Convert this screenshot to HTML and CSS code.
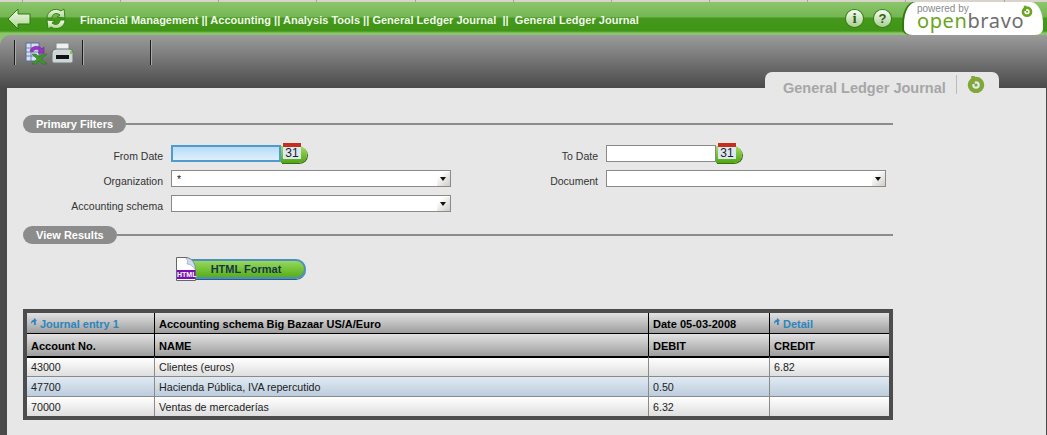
FILE: index.html
```html
<!DOCTYPE html>
<html lang="en">
<head>
<meta charset="UTF-8">
<meta name="viewport" content="width=device-width, initial-scale=1.0">
<title>General Ledger Journal</title>
<link rel="stylesheet" href="styles.css">
</head>
<body>
<div class="tabstrip"></div>
<div class="topbar">
    <svg class="nav-back" width="24" height="24" viewBox="0 0 24 24">
        <defs>
            <linearGradient id="navfill" x1="0" y1="0" x2="0" y2="1">
                <stop offset="0" stop-color="#f4faee"/>
                <stop offset="1" stop-color="#a9d48a"/>
            </linearGradient>
        </defs>
        <path d="M1 12 L11 2 V7 H23 V17 H11 V22 Z" fill="url(#navfill)" stroke="#2f7a10" stroke-width="1"/>
    </svg>
    <svg class="nav-refresh" width="22" height="24" viewBox="0 0 22 24">
        <path d="M2 11 C2 4 10 0 16 4 L19 2 L20 11 L12 10 L15 8 C11 5 7 7 7 11 Z" fill="url(#navfill)" stroke="#2f7a10" stroke-width="0.9"/>
        <path d="M20 13 C20 20 12 24 6 20 L3 22 L2 13 L10 14 L7 16 C11 19 15 17 15 13 Z" fill="url(#navfill)" stroke="#2f7a10" stroke-width="0.9"/>
    </svg>
    <div class="breadcrumb">Financial Management || Accounting || Analysis Tools || General Ledger Journal &nbsp;||&nbsp; General Ledger Journal</div>
    <div class="round-btn round-first info-btn">i</div>
    <div class="round-btn">?</div>
    <div class="logo">
        <div class="logo-powered">powered by</div>
        <div class="logo-name"><span class="logo-open">open</span><span class="logo-bravo">bravo</span></div>
        <svg class="logo-mark" width="12" height="12" viewBox="0 0 18 18">
            <circle cx="9" cy="10" r="6" fill="none" stroke="#6aa51f" stroke-width="4"/>
            <path d="M6 1 V9" stroke="#6aa51f" stroke-width="3.5"/>
            <circle cx="9" cy="10" r="1.5" fill="#6aa51f"/>
        </svg>
    </div>
</div>
<div class="toolbar-wrap">
    <div class="toolbar">
        <div class="tools">
            <span class="tool-sep"></span>
            <svg class="tool-icon" width="23" height="23" viewBox="0 0 23 23">
                <rect x="1" y="1" width="13" height="18" fill="#d5e0f2" stroke="#5a6c9a"/>
                <path d="M1 6 H14 M1 10 H14 M1 14 H14 M6 1 V19" stroke="#5a6c9a" stroke-width="0.8"/>
                <path d="M5 9 C7 3 14 3 17 7 L19 5 V11 H13 L15 9 C12 7 9 7 8 10 Z" fill="#9a34c6" stroke="#6b1e92" stroke-width="0.5"/>
                <path d="M7 12 H11 L14 15 L18 12 H22 L16 17 L22 22 H18 L14 19 L11 22 H7 L12 17 Z" fill="#3f9a2c" stroke="#246b18" stroke-width="0.5"/>
            </svg>
            <svg class="tool-icon" width="23" height="23" viewBox="0 0 23 23">
                <rect x="5" y="1" width="13" height="8" rx="1" fill="#eef0f0" stroke="#7d8688"/>
                <path d="M1 11 Q1 7 5 7 H18 Q22 7 22 11 V19 Q22 21 20 21 H3 Q1 21 1 19 Z" fill="#cfd6d8" stroke="#6d7678"/>
                <rect x="5" y="13" width="13" height="4" fill="#111"/>
                <rect x="19" y="9" width="2" height="3" fill="#7fcf3a"/>
            </svg>
            <span class="tool-sep sep-wide"></span>
            <span class="tool-sep"></span>
        </div>
        <div class="window-tab">
            <span class="window-tab-title">General Ledger Journal</span>
            <span class="window-tab-sep"></span>
            <svg width="18" height="18" viewBox="0 0 18 18">
                <circle cx="9" cy="10" r="6" fill="none" stroke="#7fa83a" stroke-width="4.5"/>
                <path d="M6 1 V9" stroke="#7fa83a" stroke-width="3.5"/>
                <circle cx="9" cy="10" r="1.6" fill="#7fa83a"/>
            </svg>
        </div>
    </div>
</div>
<div class="content">
    <div class="section-head"><span class="section-pill">Primary Filters</span></div>
    <div class="filters">
        <label>From Date</label>
        <div class="date-field">
            <div class="input focused"></div>
            <div class="cal"><span class="cal-page">31</span></div>
        </div>
        <label>To Date</label>
        <div class="date-field">
            <div class="input"></div>
            <div class="cal"><span class="cal-page">31</span></div>
        </div>
        <label>Organization</label>
        <div class="select">*<span class="select-arrow"></span></div>
        <label>Document</label>
        <div class="select"><span class="select-arrow"></span></div>
        <label>Accounting schema</label>
        <div class="select"><span class="select-arrow"></span></div>
    </div>
    <div class="section-head results-head"><span class="section-pill">View Results</span></div>
    <div class="format-row">
        <div class="html-doc">
            <svg width="20" height="24" viewBox="0 0 20 24">
                <path d="M0.5 0.5 H10 C16 1 19 6 19.5 13 V23.5 H0.5 Z" fill="#fff" stroke="#666"/>
                <path d="M10 1 C16 1 19 6 19.5 13 C17 9 14 7 11 7 Q13 4 10 1 Z" fill="#cfdcef" stroke="#8896b0" stroke-width="0.6"/>
            </svg>
            <span class="html-doc-label">HTML</span>
        </div>
        <div class="html-btn">HTML Format</div>
    </div>
    <table class="journal">
        <tr class="head-row">
            <td class="c1"><a class="link"><svg width="6" height="7" viewBox="0 0 6 7"><path d="M3.5 0 L6 3 H4.8 V7 H3 V4 Q1 4 0 6 Q0 2 2.5 2 Z" fill="#2b86bd"/></svg>Journal entry 1</a></td>
            <td class="c2">Accounting schema Big Bazaar US/A/Euro</td>
            <td class="c3">Date 05-03-2008</td>
            <td class="c4"><a class="link"><svg width="6" height="7" viewBox="0 0 6 7"><path d="M3.5 0 L6 3 H4.8 V7 H3 V4 Q1 4 0 6 Q0 2 2.5 2 Z" fill="#2b86bd"/></svg>Detail</a></td>
        </tr>
        <tr class="head-row head-row2">
            <td>Account No.</td>
            <td>NAME</td>
            <td>DEBIT</td>
            <td>CREDIT</td>
        </tr>
        <tr class="data-row first-data">
            <td>43000</td>
            <td>Clientes (euros)</td>
            <td></td>
            <td>6.82</td>
        </tr>
        <tr class="data-row alt">
            <td>47700</td>
            <td>Hacienda Pública, IVA repercutido</td>
            <td>0.50</td>
            <td></td>
        </tr>
        <tr class="data-row">
            <td>70000</td>
            <td>Ventas de mercaderías</td>
            <td>6.32</td>
            <td></td>
        </tr>
    </table>
</div>
</body>
</html>
```
FILE: styles.css
```css
html, body {
    height: 100%;
}
body {
    margin: 0;
    padding: 0;
    overflow: hidden;
    display: flex;
    flex-direction: column;
    background-color: #4a4a4a;
    font-family: "Liberation Sans", Arial, sans-serif;
    font-size: 10.5px;
    color: #333;
}

/* top strip and green bar */
.tabstrip {
    height: 2px;
    background-color: #d8d4cc;
    background-image: repeating-linear-gradient(90deg, #a8a49c 0, #a8a49c 1px, transparent 1px, transparent 98.15px);
    background-position: 22px 0;
}
.topbar {
    height: 33px;
    display: flex;
    align-items: center;
    padding-left: 7px;
    background: linear-gradient(#8cc66c 0, #74b552 15px, #45981c 16px, #3f9516 29px, #8cc66c 31px);
}
.nav-back {
    margin-right: 14px;
}
.nav-refresh {
    margin-right: 13px;
}
.breadcrumb {
    width: 753px;
    color: #f2f8ec;
    font-weight: bold;
    font-size: 11px;
    letter-spacing: 0.02px;
    white-space: nowrap;
    margin-top: 2px;
}
.round-btn {
    width: 17px;
    height: 17px;
    border-radius: 50%;
    margin-right: 11px;
    margin-top: -1px;
    text-align: center;
    line-height: 17px;
    font-weight: bold;
    font-size: 13px;
    color: #2f5f14;
    background: linear-gradient(#f8fbf4, #a9cf92);
    box-shadow: 0 0 0 1px #3a7d18;
}
.info-btn {
    font-family: "Liberation Serif", serif;
    font-size: 15px;
}
.round-first {
    margin-left: 13px;
}
.logo {
    position: relative;
    width: 139px;
    height: 33px;
    margin-left: 2px;
    box-sizing: border-box;
    padding: 2px 0 0 13px;
    background-color: #fff;
    border-radius: 12px 12px 8px 8px / 22px 22px 6px 6px;
    box-shadow: -2px 0 0 #2f7a10;
    line-height: 1;
}
.logo-powered {
    font-size: 10px;
    height: 10px;
    color: #8a8a8a;
}
.logo-name {
    font-family: "Noto Sans", sans-serif;
    font-size: 20px;
    line-height: 20px;
    letter-spacing: 0.6px;
    margin-top: -3px;
}
.logo-open {
    color: #6aa51f;
}
.logo-bravo {
    color: #6e6e6e;
}
.logo-mark {
    position: absolute;
    top: 3px;
    right: 10px;
}

/* dark toolbar */
.toolbar-wrap {
    background-color: #8cc66c;
}
.toolbar {
    height: 53px;
    display: flex;
    justify-content: space-between;
    border-top-left-radius: 10px;
    box-sizing: border-box;
    background: linear-gradient(#9b9b9b, #4a4a4a);
}
.tools {
    display: flex;
    align-items: flex-start;
    padding: 5px 0 0 14px;
}
.tool-sep {
    width: 1px;
    height: 25px;
    background-color: #1c1c1c;
    border-right: 1px solid #aaa;
    margin-right: 9px;
}
.sep-wide {
    margin-right: 66px;
}
.tool-icon {
    margin: 2px 3px 0 0;
}
.tool-icon + .tool-icon {
    margin-right: 8px;
}
.window-tab {
    position: relative;
    z-index: 1;
    align-self: flex-end;
    width: 234px;
    height: 16px;
    margin-right: 48px;
    display: flex;
    align-items: flex-start;
    box-sizing: border-box;
    padding: 3px 0 0 18px;
    background-color: #e7e7e7;
    border-radius: 7px 7px 0 0;
}
.window-tab-title {
    width: 173px;
    font-size: 14.5px;
    line-height: 16px;
    font-weight: bold;
    color: #a6a6a6;
    white-space: nowrap;
    margin-top: 5px;
}
.window-tab-sep {
    width: 1px;
    height: 19px;
    margin-right: 10px;
    background-color: #bbb;
    flex-shrink: 0;
}

/* content */
.content {
    flex: 1;
    margin: 0 1px 0 7px;
    padding: 27px 0 0 16px;
    background-color: #e7e7e7;
}
.section-head {
    width: 870px;
    height: 18px;
    display: flex;
    align-items: center;
}
.section-head::after {
    content: "";
    flex: 1;
    height: 2px;
    background-color: #8c8c8c;
}
.section-pill {
    padding: 0 13px;
    height: 18px;
    line-height: 18px;
    border-radius: 9px;
    background-color: #8c8c8c;
    color: #fff;
    font-weight: bold;
    font-size: 11px;
}
.filters {
    display: grid;
    grid-template-columns: 140px 280px 139px 280px;
    grid-auto-rows: 17px;
    column-gap: 8px;
    row-gap: 8px;
    margin-top: 12px;
    width: 855px;
}
.filters label {
    text-align: right;
    line-height: 23px;
    white-space: nowrap;
}
.date-field {
    display: flex;
    height: 17px;
}
.input {
    width: 110px;
    height: 17px;
    box-sizing: border-box;
    border: 1px solid #8a8a8a;
    background-color: #fff;
}
.input.focused {
    border: 2px solid #4f9ccc;
    background: linear-gradient(#b6dcf6, #dff0fb);
}
.cal {
    position: relative;
    width: 26px;
    height: 17px;
    margin-top: 1px;
    border-radius: 0 9px 9px 0;
    background: linear-gradient(#a4dc5e, #4fa70f);
    box-shadow: 1px 1px 0 #3a6f16;
}
.cal-page {
    position: absolute;
    top: -3px;
    left: 2px;
    width: 18px;
    height: 12px;
    border-top: 4px solid #c5301c;
    background-color: #dde7f3;
    text-align: center;
    line-height: 13px;
    font-size: 12px;
    color: #222;
}
.select {
    position: relative;
    width: 280px;
    height: 17px;
    box-sizing: border-box;
    border: 1px solid #8a8a8a;
    background-color: #fff;
    padding-left: 5px;
    line-height: 16px;
    color: #222;
}
.select-arrow {
    position: absolute;
    top: 1px;
    right: 0;
    width: 13px;
    height: 14px;
    background: linear-gradient(135deg, #fff 20%, #d0ccc6);
}
.select-arrow::after {
    content: "";
    position: absolute;
    top: 5px;
    left: 3px;
    border-style: solid;
    border-width: 4px 3.5px 0;
    border-color: #111 transparent transparent;
}
.results-head {
    margin-top: 14px;
}
.format-row {
    display: flex;
    align-items: center;
    height: 24px;
    margin: 13px 0 28px 153px;
}
.html-doc {
    position: relative;
    z-index: 1;
    width: 20px;
    height: 24px;
}
.html-doc svg {
    display: block;
}
.html-doc-label {
    position: absolute;
    left: 1px;
    right: 1px;
    bottom: 2px;
    height: 9px;
    line-height: 9px;
    background-color: #7a10b4;
    color: #fff;
    font-size: 7px;
    font-weight: bold;
    text-align: center;
}
.html-btn {
    width: 116px;
    height: 20px;
    margin-left: -6px;
    padding-right: 4px;
    box-sizing: border-box;
    border: 2px solid #4a8fbe;
    border-radius: 0 10px 10px 0;
    background: linear-gradient(#96d85e, #58ae18);
    color: #17364a;
    font-weight: bold;
    font-size: 11px;
    text-align: center;
    line-height: 16px;
    box-shadow: 0 1px 0 #2c5f80;
}

/* journal table */
.journal {
    border-collapse: separate;
    border-spacing: 0;
    table-layout: fixed;
    width: 870px;
    border: 4px solid #4d4d4d;
}
.journal td {
    padding: 0 0 0 4px;
    border-left: 1px solid #8a8a8a;
    border-top: 1px solid #8a8a8a;
    height: 20px;
    box-sizing: border-box;
    white-space: nowrap;
    color: #222;
    font-size: 10.7px;
}
.journal td:first-child {
    border-left: 0;
}
.c1 {
    width: 127px;
}
.c2 {
    width: 494px;
}
.c3 {
    width: 121px;
}
.c4 {
    width: 120px;
}
.journal .head-row td {
    height: 20px;
    padding-top: 1px;
    font-size: 11px;
    font-weight: bold;
    color: #000;
    border-left-color: #000;
    border-top: 0;
    background: linear-gradient(#e2e2e2, #9d9d9d);
}
.journal .head-row2 td {
    height: 23px;
    border-top: 1px solid #000;
}
.data-row td {
    background: linear-gradient(#fff, #dedede);
}
.journal .first-data td {
    border-top: 2px solid #000;
}
.data-row.alt td {
    background: linear-gradient(#e0eaf3, #bdcddd);
}
.journal .link {
    color: #2b86bd;
}
.link svg {
    margin-right: 3px;
    vertical-align: 3px;
}
```
